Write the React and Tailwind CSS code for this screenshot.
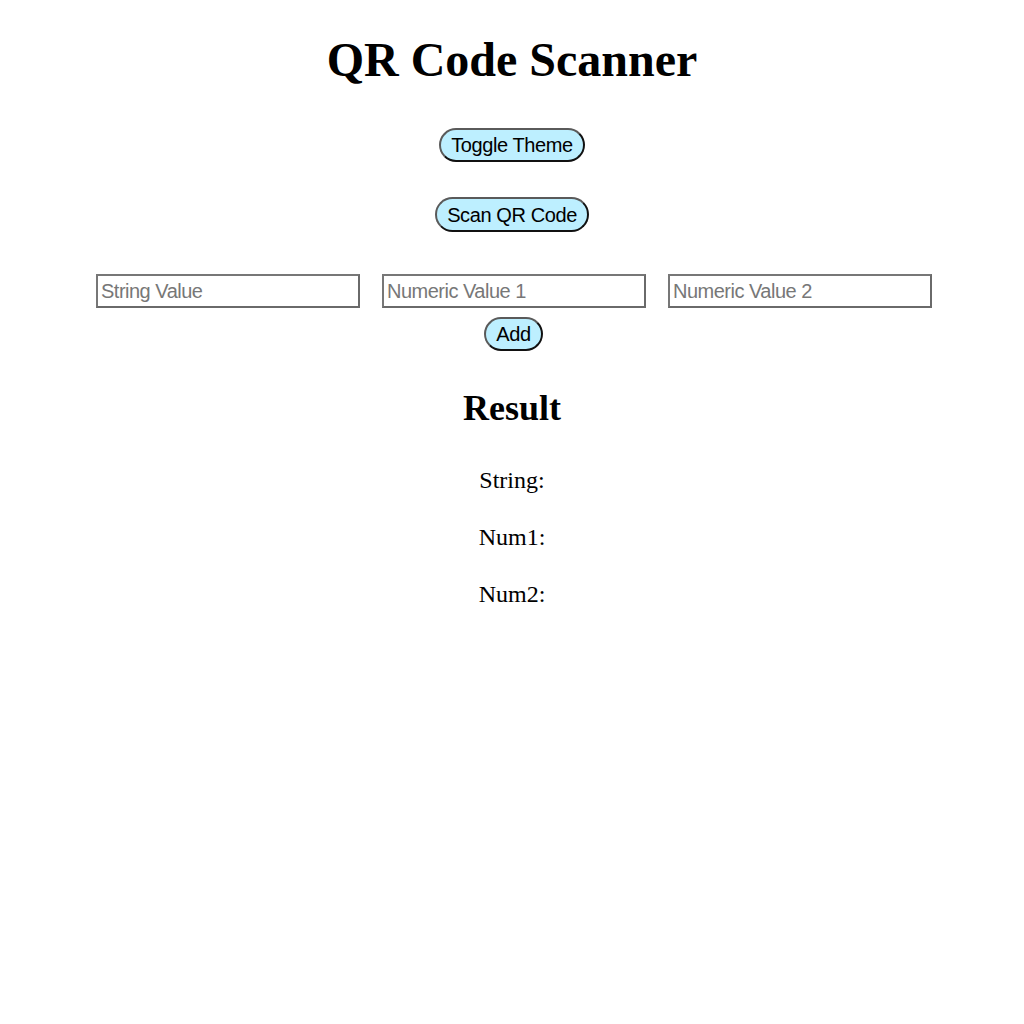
import React, { useState } from "react";

function PillButton({ children, onClick, className = "" }) {
  return (
    <button
      onClick={onClick}
      className={`rounded-full bg-[#bdefff] border-2 border-[#5a5a5a] border-b-[#111] border-r-[#111] px-[10px] h-[34px] text-[20px] leading-none text-black font-['Liberation_Sans',Arial,sans-serif] tracking-[-0.4px] ${className}`}
    >
      {children}
    </button>
  );
}

export default function App() {
  const [str, setStr] = useState("");
  const [num1, setNum1] = useState("");
  const [num2, setNum2] = useState("");

  const inputClass =
    "w-[264px] h-[34px] border-2 border-[#777] border-b-[#6a6a6a] border-r-[#6a6a6a] px-[3px] text-[20px] font-['Liberation_Sans',Arial,sans-serif] tracking-[-0.5px] placeholder:text-[#777] outline-none";

  return (
    <div className="min-h-[1024px] bg-white text-black font-['Liberation_Serif','Times_New_Roman',serif] text-center">
      <h1 className="pt-[32px] text-[48px] font-bold leading-[55px]">QR Code Scanner</h1>

      <div className="mt-[41px] flex flex-col items-center">
        <PillButton className="h-[33px]">Toggle Theme</PillButton>
        <PillButton className="mt-[35px] h-[35px]">Scan QR Code</PillButton>
      </div>

      <div className="mt-[42px] flex justify-center gap-[22px] pl-[4px]">
        <input className={inputClass} placeholder="String Value" value={str} onChange={(e) => setStr(e.target.value)} />
        <input className={inputClass} placeholder="Numeric Value 1" value={num1} onChange={(e) => setNum1(e.target.value)} />
        <input className={inputClass} placeholder="Numeric Value 2" value={num2} onChange={(e) => setNum2(e.target.value)} />
      </div>
      <div className="mt-[9px] flex justify-center pl-[3px]">
        <PillButton className="h-[32px] px-[8px]">Add</PillButton>
      </div>

      <h2 className="mt-[37px] text-[36px] font-bold leading-[41px]">Result</h2>
      <p className="mt-[37px] text-[24px] leading-[28px]">String: {str}</p>
      <p className="mt-[29px] text-[24px] leading-[28px]">Num1: {num1}</p>
      <p className="mt-[29px] text-[24px] leading-[28px]">Num2: {num2}</p>
    </div>
  );
}
